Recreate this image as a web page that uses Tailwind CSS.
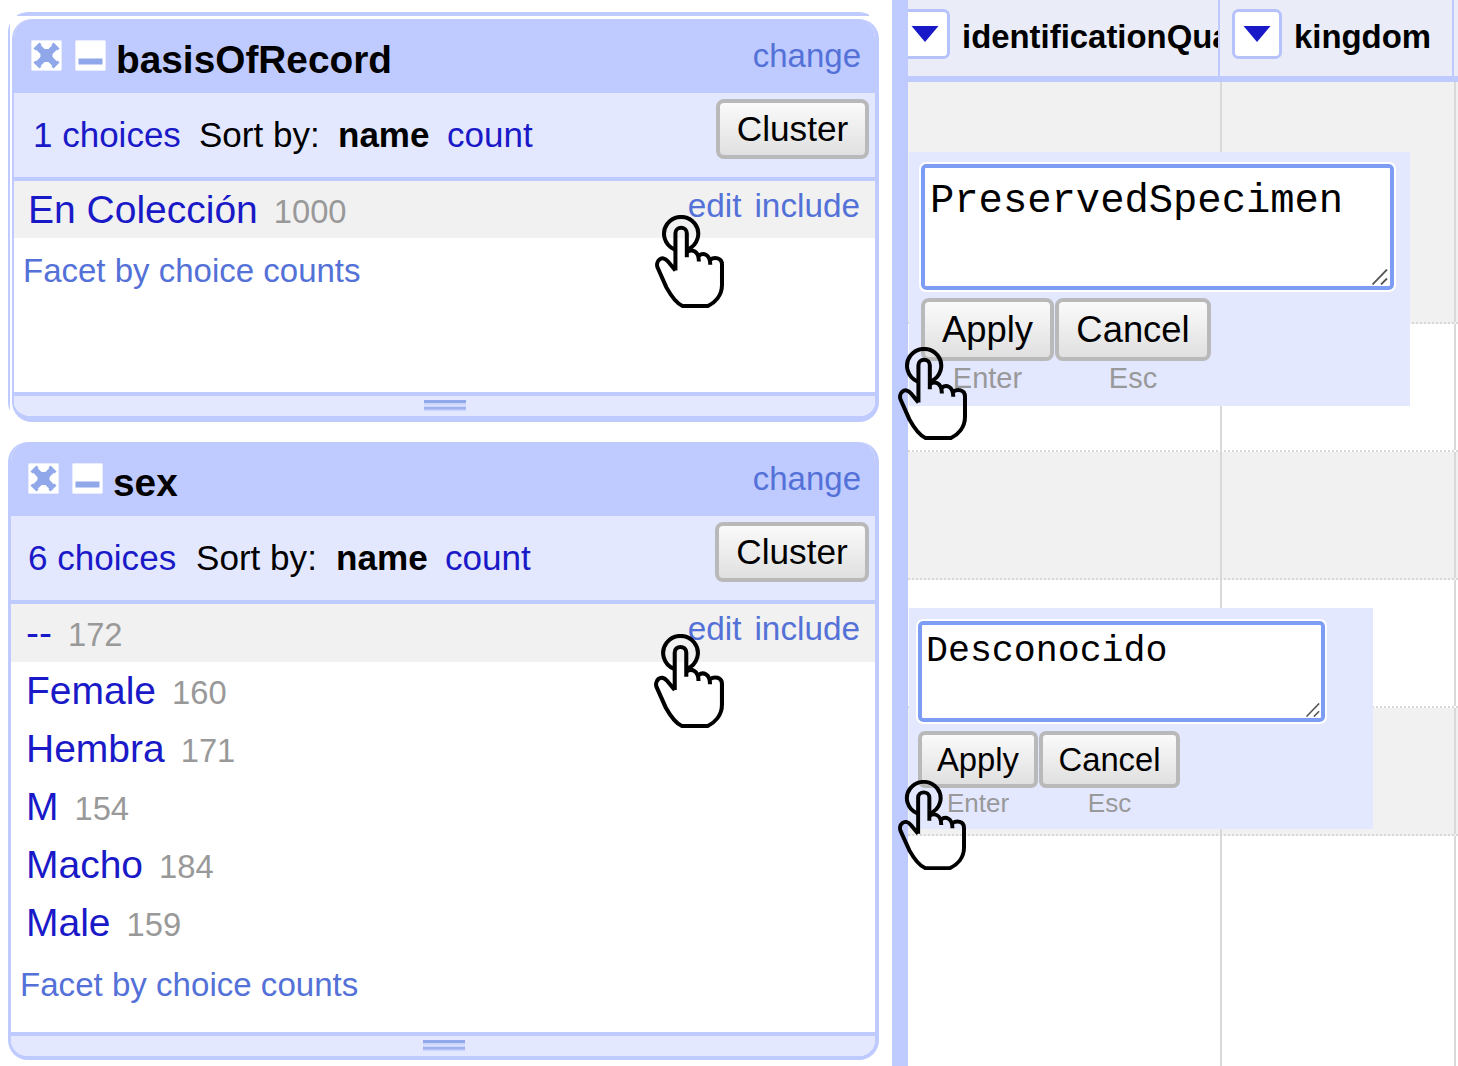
<!DOCTYPE html>
<html lang="es">
<head>
<meta charset="utf-8">
<title>Facets</title>
<script src="https://cdn.jsdelivr.net/npm/@tailwindcss/browser@4"></script>
</head>
<body class="bg-white">
<svg class="hidden">
  <symbol id="tap" viewBox="46 44 206 280" preserveAspectRatio="none">
    <g fill="none" stroke="#000" stroke-width="12" stroke-linejoin="round">
      <path d="M105 148A51 51 0 1 1 143 148"/>
      <path d="M107 211V99C107 77 141 77 141 99V171M141 157C153 146 177 149 177 184M177 167C189 156 211 161 211 194M211 179C223 169 246 172 246 193V254C246 287 224 308 204 318H128C106 308 92 284 80 262L54 203C46 184 66 161 85 184L107 211"/>
    </g>
  </symbol>
  <symbol id="remove" viewBox="0 0 31 31">
    <rect x=".5" y=".5" width="30" height="30" rx="1" fill="#fff" stroke="#e6ebff"/>
    <path d="M7 7L24 24M24 7L7 24" stroke="#90a8ea" stroke-width="6.500"/>
    <path d="M3.500 9.500L9.500 3.500M21.500 3.500L27.500 9.500M3.500 21.500L9.500 27.500M27.500 21.500L21.500 27.500" stroke="#90a8ea" stroke-width="3"/>
    <rect x="9.500" y="9" width="12" height="13" rx="1" fill="#90a8ea"/>
  </symbol>
  <symbol id="minimize" viewBox="0 0 31 31">
    <rect x=".5" y=".5" width="30" height="30" rx="1" fill="#fff" stroke="#e6ebff"/>
    <rect x="3.500" y="18.500" width="24" height="6" fill="#90a8ea"/>
  </symbol>
  <symbol id="menu" viewBox="0 0 50 50">
    <rect x="1.500" y="1.500" width="47" height="47" rx="5" fill="#fff" stroke="#b6c2fb" stroke-width="3"/>
    <path d="M11.500 17H38.500L25 33Z" fill="#1a19c8"/>
  </symbol>
  <symbol id="grip" viewBox="0 0 16 16">
    <path d="M.5 15.500L15 .5M9 15.500L15 9.500" stroke="#555" stroke-width="1.800"/>
  </symbol>
  <symbol id="handle" viewBox="0 0 42 11">
    <path fill="#ccd6fa" d="M0 0H42V11H0z"/>
    <path fill="#90a8ea" d="M0 0H42V3H0z"/>
    <path fill="#dbe2fd" d="M0 5H42V6H0z"/>
    <path fill="#9db2ee" d="M0 7H42V9.500H0z"/>
  </symbol>
</svg>

<div class="relative flex h-[1066px] w-[1458px] overflow-hidden font-['Liberation_Sans',Arial,sans-serif] text-black whitespace-nowrap">

  <div class="w-[892px] shrink-0 pt-3 pl-2">
    <!-- basisOfRecord facet -->
    <div class="h-[410px] w-[871px] rounded-[20px] bg-[linear-gradient(#bfcbff,#bfcbff),linear-gradient(#bfcbff,#bfcbff)] bg-no-repeat bg-[size:852px_4px,2px_386px] bg-[position:9px_0,0_12px] pt-[7px] pl-1">
      <section class="flex h-[403px] flex-col overflow-hidden rounded-[20px] border-b-[6px] border-l-2 border-r-4 border-[#bfcbff]">
        <header class="flex h-[74px] shrink-0 items-start bg-[#bfcbff] pl-[17px] pr-[14px]">
          <svg class="mt-[21px] size-[31px]"><use href="#remove"/></svg>
          <svg class="ml-[13px] mt-[21px] size-[31px]"><use href="#minimize"/></svg>
          <h2 class="ml-[10px] mt-[14px] text-[38.800px] leading-[54px] font-bold">basisOfRecord</h2>
          <a class="ml-auto mt-[13px] text-[33px] leading-[48px] text-[#5471d8]">change</a>
        </header>
        <div class="flex h-[88px] shrink-0 items-start border-b-4 border-[#bfcbff] bg-[#e3e8ff] pl-[19px] pr-[6px] pt-[6px]">
          <div class="mt-[11px] flex text-[35px] leading-[50px]">
            <a class="w-[166px] text-[#1a19c8]">1 choices</a><span class="w-[139px]">Sort by:</span><b class="w-[109px]">name</b><a class="text-[#1a19c8]">count</a>
          </div>
          <button class="ml-auto h-[60px] w-[153px] rounded-[8px] border-4 border-[#b9b9b9] bg-linear-to-b from-[#fafafa] to-[#e0e0e0] text-[35.200px] leading-[50px]">Cluster</button>
        </div>
        <div class="flex h-[57px] shrink-0 items-start bg-[#f1f1f1] pl-[14px] pr-[15px]">
          <div class="mt-px flex items-baseline gap-[16px] leading-[55px]"><a class="text-[39px] text-[#1a19c8]">En Colección</a><span class="text-[32.700px] text-[#999]">1000</span></div>
          <div class="mt-px ml-auto flex gap-[13px] text-[33.300px] leading-[48px] text-[#5471d8]"><a>edit</a><a>include</a></div>
        </div>
        <a class="h-[154px] shrink-0 pl-[9px] pt-[9px] text-[33px] leading-[48px] text-[#5471d8]">Facet by choice counts</a>
        <div class="flex h-6 shrink-0 justify-center border-t-4 border-[#bfcbff] bg-[#e3e8ff] pt-1">
          <svg class="h-[11px] w-[42px]"><use href="#handle"/></svg>
        </div>
      </section>
    </div>

    <!-- sex facet -->
    <section class="mt-5 flex h-[618px] w-[871px] flex-col overflow-hidden rounded-[20px] border-b-4 border-l-[3px] border-r-4 border-[#bfcbff]">
      <header class="flex h-[74px] shrink-0 items-start bg-[#bfcbff] pl-[17px] pr-[14px]">
        <svg class="mt-[21px] size-[31px]"><use href="#remove"/></svg>
        <svg class="ml-[13px] mt-[21px] size-[31px]"><use href="#minimize"/></svg>
        <h2 class="ml-[10px] mt-[14px] text-[38.800px] leading-[54px] font-bold">sex</h2>
        <a class="ml-auto mt-[13px] text-[33px] leading-[48px] text-[#5471d8]">change</a>
      </header>
      <div class="flex h-[88px] shrink-0 items-start border-b-4 border-[#bfcbff] bg-[#e3e8ff] pl-[17px] pr-[6px] pt-[6px]">
        <div class="mt-[11px] flex text-[35.100px] leading-[50px]">
          <a class="w-[168px] text-[#1a19c8]">6 choices</a><span class="w-[140px]">Sort by:</span><b class="w-[109px]">name</b><a class="text-[#1a19c8]">count</a>
        </div>
        <button class="ml-auto h-[60px] w-[154px] rounded-[8px] border-4 border-[#b9b9b9] bg-linear-to-b from-[#fafafa] to-[#e0e0e0] text-[35.200px] leading-[50px]">Cluster</button>
      </div>
      <div class="flex h-[58px] shrink-0 items-start bg-[#f1f1f1] pl-[15px] pr-[15px]">
        <div class="flex items-baseline gap-[16px] leading-[58px]"><a class="text-[39px] text-[#1a19c8]">--</a><span class="text-[32.700px] text-[#999]">172</span></div>
        <div class="mt-px ml-auto flex gap-[13px] text-[33.300px] leading-[48px] text-[#5471d8]"><a>edit</a><a>include</a></div>
      </div>
      <div class="flex h-[58px] shrink-0 items-baseline gap-[16px] pl-[15px] leading-[58px]"><a class="text-[39px] text-[#1a19c8]">Female</a><span class="text-[32.700px] text-[#999]">160</span></div>
      <div class="flex h-[58px] shrink-0 items-baseline gap-[16px] pl-[15px] leading-[58px]"><a class="text-[39px] text-[#1a19c8]">Hembra</a><span class="text-[32.700px] text-[#999]">171</span></div>
      <div class="flex h-[58px] shrink-0 items-baseline gap-[16px] pl-[15px] leading-[58px]"><a class="text-[39px] text-[#1a19c8]">M</a><span class="text-[32.700px] text-[#999]">154</span></div>
      <div class="flex h-[58px] shrink-0 items-baseline gap-[16px] pl-[15px] leading-[58px]"><a class="text-[39px] text-[#1a19c8]">Macho</a><span class="text-[32.700px] text-[#999]">184</span></div>
      <div class="flex h-[58px] shrink-0 items-baseline gap-[16px] pl-[15px] leading-[58px]"><a class="text-[39px] text-[#1a19c8]">Male</a><span class="text-[32.700px] text-[#999]">159</span></div>
      <a class="h-[80px] shrink-0 pl-[9px] pt-[9px] text-[33.100px] leading-[48px] text-[#5471d8]">Facet by choice counts</a>
      <div class="flex h-6 shrink-0 justify-center border-t-4 border-[#bfcbff] bg-[#e3e8ff] pt-1 pl-px">
        <svg class="h-[11px] w-[42px]"><use href="#handle"/></svg>
      </div>
    </section>
  </div>

  <div class="w-4 shrink-0 bg-[#bfcbff]"></div>

  <!-- data grid -->
  <div class="flex w-[550px] flex-col">
    <div class="flex h-[82px] shrink-0 border-b-[6px] border-[#bfcbff] bg-[#eaedf7] text-[32.900px] leading-[46px] font-bold">
      <div class="flex w-[312px] overflow-hidden border-r-2 border-[#bfcbff] pt-[9px]"><svg class="-ml-[8px] size-[50px] shrink-0"><use href="#menu"/></svg><span class="ml-[12px] mt-[5px]">identificationQualifier</span></div>
      <div class="flex w-[234px] shrink-0 border-r-2 border-[#bfcbff] pl-3 pt-[9px]"><svg class="size-[50px] shrink-0"><use href="#menu"/></svg><span class="ml-[12px] mt-[5px]">kingdom</span></div>
    </div>
    <div class="flex h-[242px] shrink-0 border-b-2 border-dotted border-[#d8d8d8] bg-[#f1f1f1]"><div class="w-[314px] border-r-2 border-solid border-[#d9d9d9]"></div><div class="w-[234px] border-r-2 border-solid border-[#d9d9d9]"></div></div>
    <div class="flex h-[128px] shrink-0 border-b-2 border-dotted border-[#d8d8d8]"><div class="w-[314px] border-r-2 border-solid border-[#d9d9d9]"></div><div class="w-[234px] border-r-2 border-solid border-[#d9d9d9]"></div></div>
    <div class="flex h-[128px] shrink-0 border-b-2 border-dotted border-[#d8d8d8] bg-[#f1f1f1]"><div class="w-[314px] border-r-2 border-solid border-[#d9d9d9]"></div><div class="w-[234px] border-r-2 border-solid border-[#d9d9d9]"></div></div>
    <div class="flex h-[128px] shrink-0 border-b-2 border-dotted border-[#d8d8d8]"><div class="w-[314px] border-r-2 border-solid border-[#d9d9d9]"></div><div class="w-[234px] border-r-2 border-solid border-[#d9d9d9]"></div></div>
    <div class="flex h-[128px] shrink-0 border-b-2 border-dotted border-[#d8d8d8] bg-[#f1f1f1]"><div class="w-[314px] border-r-2 border-solid border-[#d9d9d9]"></div><div class="w-[234px] border-r-2 border-solid border-[#d9d9d9]"></div></div>
    <div class="flex grow"><div class="w-[314px] border-r-2 border-[#d9d9d9]"></div><div class="w-[234px] border-r-2 border-[#d9d9d9]"></div></div>
  </div>

  <!-- edit popups -->
  <div class="absolute left-[909px] top-[152px] h-[254px] w-[501px] bg-[#e3e8ff] pl-3 pt-3">
    <div class="flex h-[126px] w-[473px] items-end justify-between rounded-[5px] border-4 border-[#7d9df5] bg-white pl-[5px] pr-[2px] outline-2 outline-white">
      <span class="self-start pt-[9px] font-['Courier_New','Liberation_Mono',monospace] text-[40.500px] leading-[48px]">PreservedSpecimen</span>
      <svg class="mb-[1px] size-4 -ml-4"><use href="#grip"/></svg>
    </div>
    <div class="mt-2 flex gap-px text-center text-[29px] leading-[34px] text-[#999]">
      <div><button class="block h-[63px] w-[133px] rounded-[8px] border-4 border-[#b9b9b9] bg-linear-to-b from-[#fafafa] to-[#e0e0e0] text-[36.400px] leading-[52px] text-black">Apply</button>Enter</div>
      <div><button class="block h-[63px] w-[156px] rounded-[8px] border-4 border-[#b9b9b9] bg-linear-to-b from-[#fafafa] to-[#e0e0e0] text-[36.400px] leading-[52px] text-black">Cancel</button>Esc</div>
    </div>
  </div>
  <div class="absolute left-[909px] top-[608px] h-[221px] w-[464px] bg-[#e3e8ff] pl-[9px] pt-[13px]">
    <div class="flex h-[101px] w-[407px] items-end justify-between rounded-[5px] border-4 border-[#7d9df5] bg-white pl-[4px] pr-[1px] outline-2 outline-white">
      <span class="self-start pt-[5px] font-['Courier_New','Liberation_Mono',monospace] text-[36.600px] leading-[44px]">Desconocido</span>
      <svg class="mb-px size-[14px]"><use href="#grip"/></svg>
    </div>
    <div class="mt-[9px] flex gap-px text-center text-[26px] leading-[31px] text-[#999]">
      <div><button class="block h-[57px] w-[120px] rounded-[7px] border-4 border-[#b9b9b9] bg-linear-to-b from-[#fafafa] to-[#e0e0e0] text-[32.800px] leading-[46px] text-black">Apply</button>Enter</div>
      <div><button class="block h-[57px] w-[141px] rounded-[7px] border-4 border-[#b9b9b9] bg-linear-to-b from-[#fafafa] to-[#e0e0e0] text-[32.800px] leading-[46px] text-black">Cancel</button>Esc</div>
    </div>
  </div>

  <!-- tap markers -->
  <svg class="absolute left-[655px] top-[215px] h-[93px] w-[69px]"><use href="#tap"/></svg>
  <svg class="absolute left-[654px] top-[634px] h-[94px] w-[70px]"><use href="#tap"/></svg>
  <svg class="absolute left-[898px] top-[347px] h-[93px] w-[69px]"><use href="#tap"/></svg>
  <svg class="absolute left-[898px] top-[780px] h-[90px] w-[68px]"><use href="#tap"/></svg>
</div>
</body>
</html>
